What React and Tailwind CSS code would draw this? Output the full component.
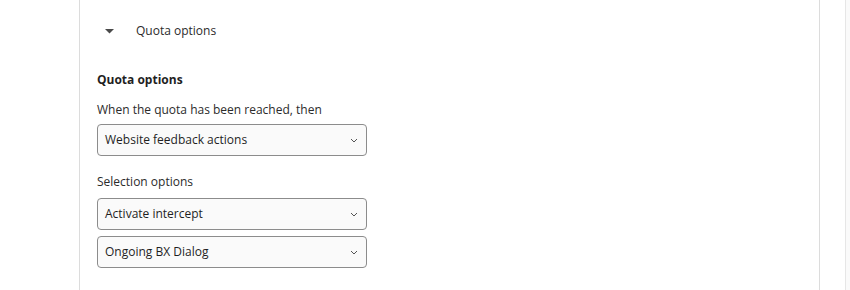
import React from "react";

function Chevron() {
  return (
    <svg width="8" height="5" viewBox="0 0 8 5" className="shrink-0">
      <path d="M1 1 L4 4 L7 1" fill="none" stroke="#555" strokeWidth="1" />
    </svg>
  );
}

function Select({ label }) {
  return (
    <div className="flex h-[32px] w-[270px] items-center justify-between rounded-[4px] border border-[#8c8c8c] bg-[#fafafa] pl-[7px] pr-[8px] text-[12px] text-[#1f1f1f]">
      <span>{label}</span>
      <Chevron />
    </div>
  );
}

export default function App() {
  return (
    <div
      className="relative h-[290px] w-[850px] overflow-hidden bg-white"
      style={{ fontFamily: '"Open Sans", "Noto Sans", sans-serif' }}
    >
      <div className="absolute right-0 top-0 h-full w-[5px] border-l border-[#e6e6e6] bg-[#fafafa]" />
      <div className="ml-[79px] mt-[-8px] h-[320px] w-[741px] rounded-[8px] border border-[#dcdcdc] bg-white">
        <div className="flex h-[76px] items-center pl-[25px]">
          <svg width="9" height="5" viewBox="0 0 9 5">
            <path d="M0 0 H9 L4.5 4.5 Z" fill="#4a4a4a" />
          </svg>
          <span className="ml-[22px] text-[12px] text-[#2b2b2b]">Quota options</span>
        </div>
        <div className="pl-[17px] pt-[2px]">
          <div className="text-[12px] font-bold text-[#1f1f1f]">Quota options</div>
          <div className="mt-[12px] text-[12px] text-[#2b2b2b]">When the quota has been reached, then</div>
          <div className="mt-[5px]">
            <Select label="Website feedback actions" />
          </div>
          <div className="mt-[17px] text-[12px] text-[#2b2b2b]">Selection options</div>
          <div className="mt-[7px] flex flex-col gap-[6px]">
            <Select label="Activate intercept" />
            <Select label="Ongoing BX Dialog" />
          </div>
        </div>
      </div>
    </div>
  );
}
